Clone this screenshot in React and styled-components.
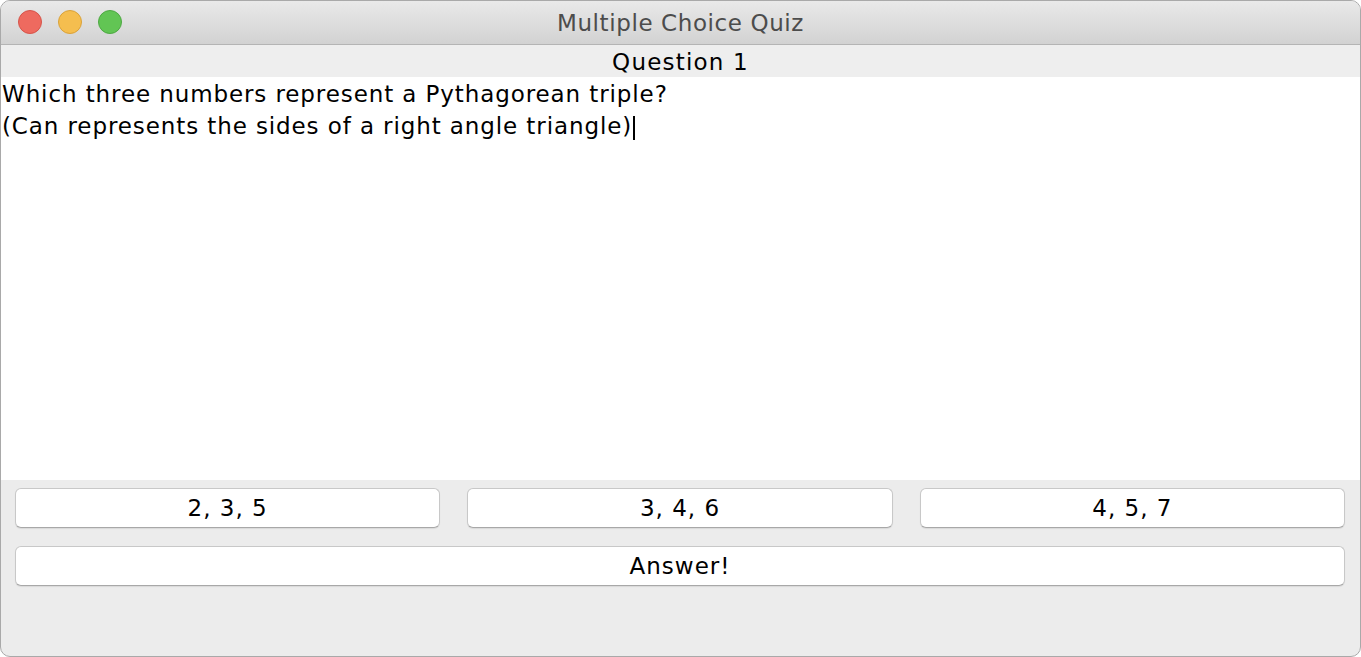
import styled, { createGlobalStyle } from 'styled-components';

const GlobalStyle = createGlobalStyle`
  html, body {
    margin: 0;
    padding: 0;
    background: #ffffff;
  }
  body {
    font-family: "DejaVu Sans", "Liberation Sans", sans-serif;
  }
`;

const choices = ['2, 3, 5', '3, 4, 6', '4, 5, 7'];

function App() {
  return (
    <>
      <GlobalStyle />
      <Window>
        <TitleBar>
          <Lights>
            <Light color='#ee6a5f' edge='#d5544a' />
            <Light color='#f5be4f' edge='#d9a23a' />
            <Light color='#62c554' edge='#4ea843' />
          </Lights>
          <Title>Multiple Choice Quiz</Title>
        </TitleBar>
        <Heading>Question 1</Heading>
        <QuestionArea>
          <Line>Which three numbers represent a Pythagorean triple?</Line>
          <Line>
            (Can represents the sides of a right angle triangle)
            <Caret />
          </Line>
        </QuestionArea>
        <Controls>
          <ChoiceRow>
            {choices.map(c => (
              <Button key={c}>{c}</Button>
            ))}
          </ChoiceRow>
          <Button>Answer!</Button>
        </Controls>
      </Window>
    </>
  );
}

const Window = styled.div`
  width: 1361px;
  height: 657px;
  box-sizing: border-box;
  border: 1px solid #a9a9a9;
  border-radius: 10px;
  overflow: hidden;
  display: flex;
  flex-direction: column;
  background: #ececec;
`;

const TitleBar = styled.div`
  height: 43px;
  flex: none;
  position: relative;
  display: flex;
  align-items: center;
  justify-content: center;
  background: linear-gradient(#e9e9e9, #d2d2d2);
  border-bottom: 1px solid #b4b4b4;
`;

const Lights = styled.div`
  position: absolute;
  left: 17px;
  top: 9px;
  display: flex;
  gap: 16px;
`;

const Light = styled.span`
  width: 24px;
  height: 24px;
  border-radius: 50%;
  box-sizing: border-box;
  background: ${props => props.color};
  border: 1px solid ${props => props.edge};
`;

const Title = styled.div`
  font-size: 23px;
  letter-spacing: 0.6px;
  color: #4c4c4c;
  margin-top: 1px;
`;

const Heading = styled.div`
  height: 32px;
  flex: none;
  box-sizing: border-box;
  padding-top: 2px;
  display: flex;
  align-items: center;
  justify-content: center;
  font-size: 23px;
  letter-spacing: 1.2px;
  color: #000;
  background: #eeeeee;
`;

const QuestionArea = styled.div`
  height: 403px;
  flex: none;
  box-sizing: border-box;
  background: #ffffff;
  padding: 1px 1px 0 1px;
`;

const Line = styled.div`
  font-size: 23px;
  line-height: 32px;
  letter-spacing: 0.9px;
  color: #000;
  white-space: pre;
`;

const Caret = styled.span`
  display: inline-block;
  width: 2px;
  height: 24px;
  background: #000;
  vertical-align: -6px;
  margin-left: 1px;
`;

const Controls = styled.div`
  flex: 1;
  display: flex;
  flex-direction: column;
  gap: 18px;
  padding: 8px 15px 0 14px;
`;

const ChoiceRow = styled.div`
  display: grid;
  grid-template-columns: repeat(3, 1fr);
  column-gap: 27px;
`;

const Button = styled.div`
  height: 40px;
  box-sizing: border-box;
  display: flex;
  align-items: center;
  justify-content: center;
  background: #ffffff;
  border: 1px solid #c8c8c8;
  border-bottom-color: #a8a8a8;
  border-radius: 6px;
  box-shadow: 0 1px 1px rgba(0, 0, 0, 0.08);
  font-size: 23px;
  letter-spacing: 1px;
  color: #000;
`;

export default App;
